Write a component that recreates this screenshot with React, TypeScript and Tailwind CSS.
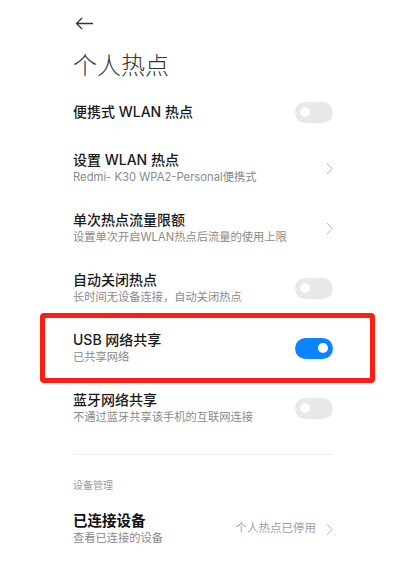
import React from "react";

const font = { fontFamily: 'Inter, "Noto Sans CJK SC", "Noto Sans", sans-serif' };

function Toggle({ on }: { on?: boolean }) {
  return (
    <div
      className={`relative w-[38px] h-[21px] rounded-full shrink-0 ${on ? "bg-[#0d84ff]" : "bg-[#e8e8e8]"}`}
    >
      <div
        className={`absolute top-[5.5px] w-[10px] h-[10px] rounded-full bg-white ${on ? "right-[5px]" : "left-[5px]"}`}
      />
    </div>
  );
}

function Chevron() {
  return (
    <svg width="7" height="13" viewBox="0 0 7 13" className="shrink-0">
      <path d="M1 1 L6 6.5 L1 12" fill="none" stroke="#b5b5b5" strokeWidth="1" />
    </svg>
  );
}

function Row({
  title,
  sub,
  right,
  h = "h-[60px]",
  children,
}: {
  title: string;
  sub?: string;
  right: React.ReactNode;
  h?: string;
  children?: React.ReactNode;
}) {
  return (
    <div className={`relative flex items-center justify-between ${h}`}>
      {children}
      <div className="flex flex-col">
        <div className="text-[14px] leading-[18px] font-medium text-[#1a1a1a]">{title}</div>
        {sub && <div className="text-[11.25px] leading-[16px] text-[#8a8a8a]">{sub}</div>}
      </div>
      {right}
    </div>
  );
}

export default function App() {
  return (
    <div className="w-[408px] h-[581px] bg-white overflow-hidden" style={font}>
      <div className="pl-[73px] pr-[75px]">
        <div className="h-[46px] flex items-center">
          <svg width="19" height="13" viewBox="0 0 19 13" className="ml-[2px]">
            <path d="M18 6.5 H1.5 M7 1 L1.5 6.5 L7 12" fill="none" stroke="#333" strokeWidth="1.3" />
          </svg>
        </div>
        <div className="h-[40px] flex items-center text-[24px] leading-[40px] font-light text-[#333]">
          个人热点
        </div>
        <Row title="便携式 WLAN 热点" right={<Toggle />} h="h-[52px]" />
        <Row title="设置 WLAN 热点" sub="Redmi- K30 WPA2-Personal便携式" right={<Chevron />} />
        <Row title="单次热点流量限额" sub="设置单次开启WLAN热点后流量的使用上限" right={<Chevron />} />
        <Row title="自动关闭热点" sub="长时间无设备连接，自动关闭热点" right={<Toggle />} />
        <Row title="USB 网络共享" sub="已共享网络" right={<Toggle on />}>
          <div className="absolute left-[-33px] right-[-42px] top-[-5px] bottom-[-5px] border-[5px] border-[#fb1e14] rounded-[4px] pointer-events-none" />
        </Row>
        <Row title="蓝牙网络共享" sub="不通过蓝牙共享该手机的互联网连接" right={<Toggle />} />
        <div className="mt-[16px] h-px bg-[#eeeeee]" />
        <div className="pt-[24px] text-[10px] leading-[12px] text-[#9a9a9a]">设备管理</div>
        <div className="mt-[8px] h-[60px] flex items-center justify-between">
          <div className="flex flex-col">
            <div className="text-[14.5px] leading-[18px] font-bold text-[#111]">已连接设备</div>
            <div className="text-[11.25px] leading-[16px] text-[#8a8a8a]">查看已连接的设备</div>
          </div>
          <div className="flex items-center gap-[10px]">
            <span className="text-[11.5px] text-[#a0a0a0]">个人热点已停用</span>
            <Chevron />
          </div>
        </div>
      </div>
    </div>
  );
}
